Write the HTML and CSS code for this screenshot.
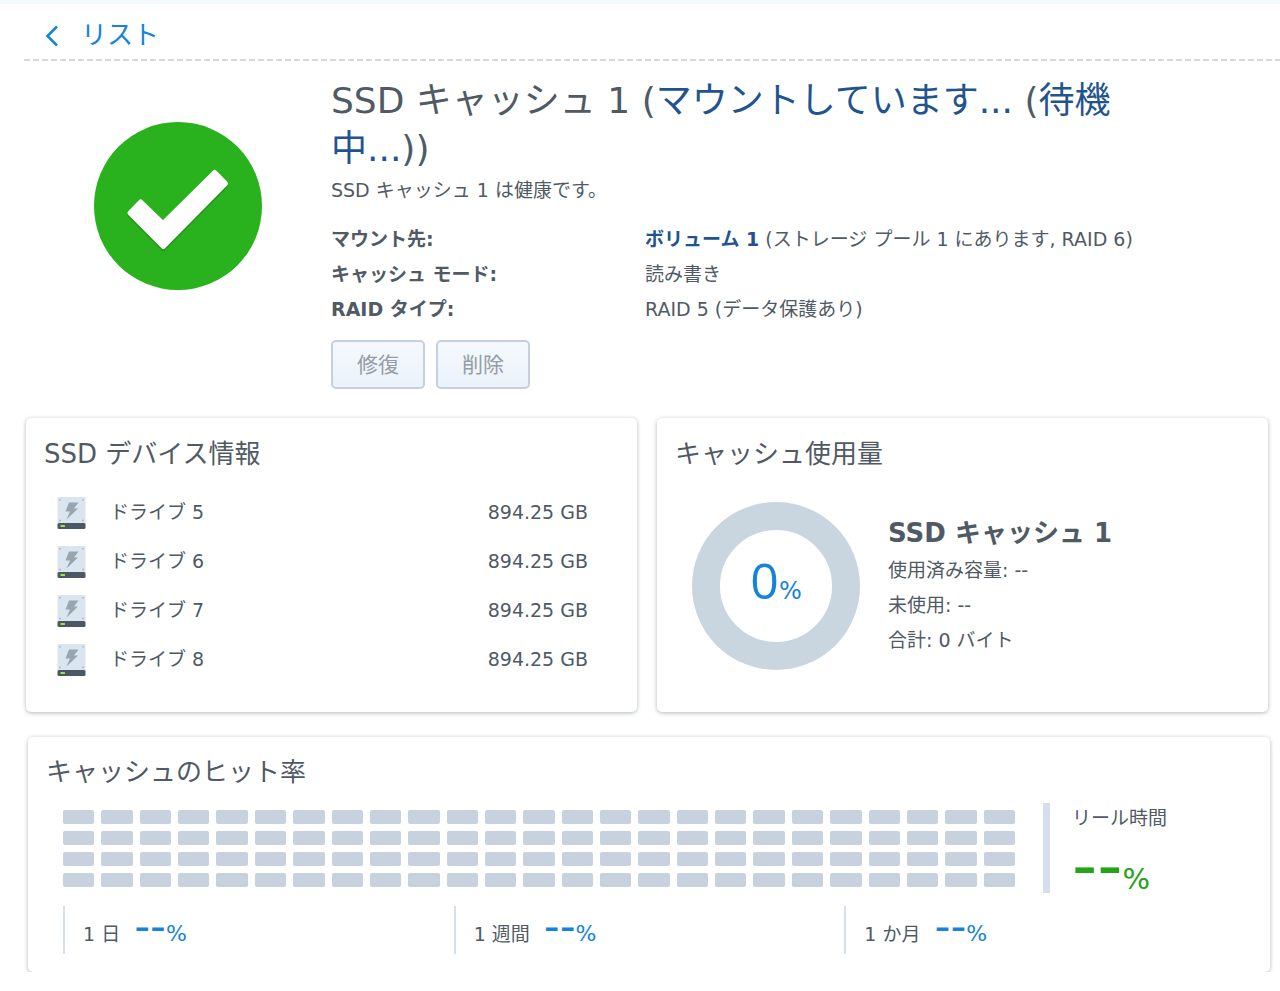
FILE: index.html
```
<!DOCTYPE html>
<html lang="ja">
<head>
    <meta charset="UTF-8">
    <title>SSD キャッシュ</title>
    <meta name="viewport" content="width=device-width, initial-scale=1.0">
    <link rel="stylesheet" href="styles.css">
</head>
<body>
    <svg width="0" height="0" class="sprite" aria-hidden="true">
        <symbol id="drive" viewBox="0 0 28 32">
            <rect x="0" y="0" width="28" height="27" rx="1" fill="#dae6ef"/>
            <g fill="#a9b5bf">
                <circle cx="2.5" cy="2.8" r=".9"/>
                <circle cx="25.5" cy="2.8" r=".9"/>
                <circle cx="2.5" cy="23.5" r=".9"/>
                <circle cx="25.5" cy="23.5" r=".9"/>
            </g>
            <path d="M11.500 5.500H21L16.500 11.500H20.500L9 22.500L12.500 14.500H8z" fill="#98a5af"/>
            <rect x="0" y="26" width="28" height="6" rx="1.500" fill="#4b5863"/>
            <rect x="3" y="28" width="4.500" height="2" rx=".5" fill="#9be63c"/>
        </symbol>
    </svg>

    <nav class="topbar">
        <a href="#" class="back">
            <svg width="14" height="22" viewBox="0 0 14 22" aria-hidden="true">
                <path d="M12 1.500L2.500 11l9.500 9.500" fill="none" stroke="currentColor" stroke-width="2.500"/>
            </svg>
            リスト
        </a>
    </nav>

    <main>
        <section class="summary">
            <svg class="status-icon" width="168" height="168" viewBox="0 0 168 168" role="img" aria-label="健康">
                <circle cx="84" cy="84" r="84" fill="#29b11e"/>
                <g stroke-width="5" stroke-linejoin="round">
                    <path d="M36 93L46.700 82L69 103.500L120.700 52.500L131.500 63.500L69.300 126.500z" fill="#229419" stroke="#229419"/>
                    <path d="M36 91L46.700 80L69 101.500L120.700 50.500L131.500 61.500L69.300 124.500z" fill="#fff" stroke="#fff"/>
                </g>
            </svg>
            <div class="summary-body">
                <h1>SSD キャッシュ 1 (<span class="status">マウントしています...</span> (<span class="status">待機中...</span>))</h1>
                <p>SSD キャッシュ 1 は健康です。</p>
                <dl class="info">
                    <dt>マウント先:</dt>
                    <dd><strong class="status">ボリューム 1</strong> (ストレージ プール 1 にあります, RAID 6)</dd>
                    <dt>キャッシュ モード:</dt>
                    <dd>読み書き</dd>
                    <dt>RAID タイプ:</dt>
                    <dd>RAID 5 (データ保護あり)</dd>
                </dl>
                <div class="actions">
                    <button type="button" disabled>修復</button>
                    <button type="button" disabled>削除</button>
                </div>
            </div>
        </section>

        <div class="cards">
            <section class="card">
                <h2>SSD デバイス情報</h2>
                <table class="drives">
                    <tr><td class="icon"><svg width="29" height="32"><use href="#drive"/></svg></td><td>ドライブ 5</td><td class="size">894.25 GB</td></tr>
                    <tr><td class="icon"><svg width="29" height="32"><use href="#drive"/></svg></td><td>ドライブ 6</td><td class="size">894.25 GB</td></tr>
                    <tr><td class="icon"><svg width="29" height="32"><use href="#drive"/></svg></td><td>ドライブ 7</td><td class="size">894.25 GB</td></tr>
                    <tr><td class="icon"><svg width="29" height="32"><use href="#drive"/></svg></td><td>ドライブ 8</td><td class="size">894.25 GB</td></tr>
                </table>
            </section>

            <section class="card">
                <h2>キャッシュ使用量</h2>
                <div class="usage">
                    <div class="ring"><span class="ring-value">0</span><span class="ring-unit">%</span></div>
                    <div class="usage-text">
                        <h3>SSD キャッシュ 1</h3>
                        <p>使用済み容量: --</p>
                        <p>未使用: --</p>
                        <p>合計: 0 バイト</p>
                    </div>
                </div>
            </section>
        </div>

        <section class="card hit-rate">
            <h2>キャッシュのヒット率</h2>
            <div class="realtime">
                <div class="blocks" id="blocks"></div>
                <div class="now">
                    <div class="now-label">リール時間</div>
                    <div class="now-value"><span class="dashes">--</span>%</div>
                </div>
            </div>
            <div class="periods">
                <div class="period">1 日 <span class="rate"><span class="dashes">--</span>%</span></div>
                <div class="period">1 週間 <span class="rate"><span class="dashes">--</span>%</span></div>
                <div class="period">1 か月 <span class="rate"><span class="dashes">--</span>%</span></div>
            </div>
        </section>
    </main>

    <script>
        const blocks = document.getElementById("blocks");

        // 25 columns x 4 rows
        for (let i = 0; i < 100; i++) {
            blocks.appendChild(document.createElement("i"));
        }
    </script>
</body>
</html>
```
FILE: styles.css
```
* {
    margin: 0;
    padding: 0;
    box-sizing: border-box;
}

body {
    background: #fff;
    border-top: 4px solid #f5fbfd;
    color: #505a64;
    font-family: "DejaVu Sans", "Noto Sans CJK JP", sans-serif;
    font-size: 19px;
    line-height: 35px;
}

.sprite {
    position: absolute;
}

.topbar {
    margin-left: 24px;
    padding: 14px 0 7px 21px;
    height: 57px;
    background: repeating-linear-gradient(90deg, #d3d9de 0, #d3d9de 6px, transparent 6px, transparent 9px) left bottom / 100% 2px no-repeat;
}

.back {
    display: inline-flex;
    align-items: center;
    gap: 22px;
    color: #1583dc;
    font-size: 26px;
    text-decoration: none;
}

.summary {
    display: flex;
    padding: 16px 154px 0 94px;
}

.status-icon {
    flex: none;
    margin: 45px 69px 0 0;
}

.summary-body {
    flex: 1;
}

h1 {
    font-size: 36px;
    font-weight: normal;
    line-height: 48px;
}

.status {
    color: #1f5490;
}

.info {
    display: grid;
    grid-template-columns: 314px max-content;
    margin: 14px 0 13px;
}

.info dt {
    font-weight: bold;
}

.actions {
    display: flex;
    gap: 11px;
}

.actions button {
    padding: 0 24px 3px;
    height: 49px;
    border: 2px solid #c4d0dc;
    border-radius: 5px;
    background: linear-gradient(#f5f9fd, #eaf2fa);
    color: #939ca7;
    font-family: inherit;
    font-size: 21px;
}

.cards {
    display: grid;
    grid-template-columns: 1fr 1fr;
    gap: 20px;
    margin: 29px 12px 25px 26px;
}

.card {
    padding: 19px 18px 18px;
    border-radius: 5px;
    background: #fff;
    box-shadow: 0 1px 4px rgba(60, 75, 90, 0.4);
}

h2 {
    font-size: 26px;
    font-weight: normal;
}

.drives {
    margin: 16px 31px 5px 13px;
    width: calc(100% - 44px);
    border-collapse: collapse;
}

.drives td {
    height: 49px;
}

.drives .icon {
    width: 53px;
}

.drives svg {
    display: block;
}

.drives .size {
    text-align: right;
}

.usage {
    display: flex;
    align-items: center;
    gap: 28px;
    padding: 30px 17px 24px;
}

.ring {
    display: flex;
    justify-content: center;
    align-items: baseline;
    flex: none;
    width: 168px;
    height: 168px;
    border: 28px solid #cad6df;
    border-radius: 50%;
    color: #1583dc;
    line-height: 100px;
}

.ring-value {
    font-family: "Open Sans", "Noto Sans", sans-serif;
    font-size: 50px;
}

.ring-unit {
    font-size: 24px;
}

h3 {
    font-size: 26px;
    line-height: 39px;
}

.hit-rate {
    margin: 0 10px 20px 28px;
    padding-top: 18px;
    /* flat lower edge, no shadow below */
    clip-path: inset(-6px -6px 0 -6px);
}

.realtime {
    display: flex;
    padding-left: 17px;
    margin-top: 13px;
}

.blocks {
    display: grid;
    grid-template-columns: repeat(25, 1fr);
    grid-auto-rows: 14px;
    gap: 7px;
    flex: 1;
    padding: 7px 28px 0 0;
}

.blocks i {
    border-radius: 2px;
    background: #c7d2de;
}

.now {
    width: 209px;
    height: 90px;
    padding-left: 22px;
    border-left: 7px solid #d5dfeb;
}

.now-label {
    line-height: 30px;
}

.now-value {
    color: #25a319;
    font-size: 29px;
    line-height: 64px;
}

.now-value .dashes {
    font-size: 70px;
}

.periods {
    display: grid;
    grid-template-columns: repeat(3, 1fr);
    margin: 13px 17px 0;
}

.period {
    height: 48px;
    padding-left: 18px;
    border-left: 2px solid #d5dfeb;
    line-height: 39px;
}

.rate {
    margin-left: 8px;
    color: #1583dc;
    font-size: 22px;
}

.rate .dashes {
    font-size: 44px;
}
```
